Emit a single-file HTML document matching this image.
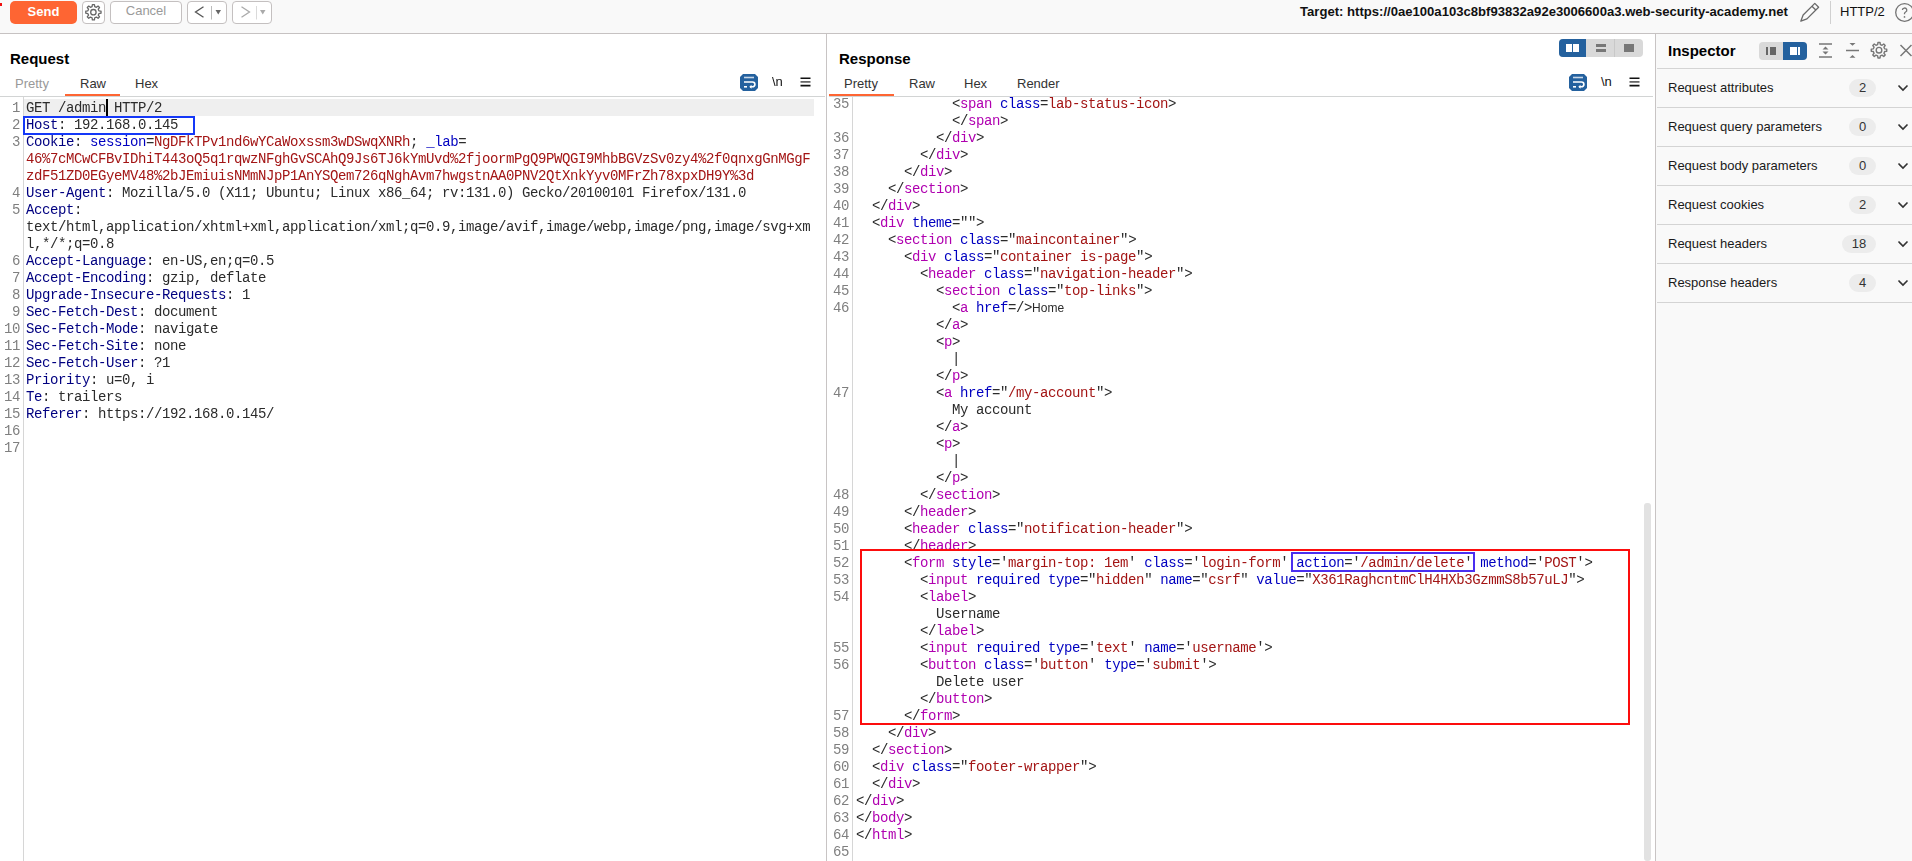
<!DOCTYPE html>
<html><head><meta charset="utf-8">
<style>
*{box-sizing:border-box}
html,body{margin:0;padding:0}
body{width:1912px;height:861px;overflow:hidden;position:relative;background:#fff;font-family:"Liberation Sans",sans-serif;font-size:13px;color:#222}
.a{position:absolute}
.ln{position:absolute;height:17px;line-height:17px;text-align:right;font-family:"Liberation Mono",monospace;font-size:14px;letter-spacing:-0.4px;color:#7f7f7f;white-space:pre}
.cl{position:absolute;height:17px;line-height:17px;font-family:"Liberation Mono",monospace;font-size:14px;letter-spacing:-0.4px;white-space:pre;color:#2b2b2b}
.sans{font-family:"Liberation Sans",sans-serif;font-size:12px;letter-spacing:0;color:#2b2b2b}
.btn{position:absolute;top:1px;height:23px;border:1px solid #c4c0c0;border-radius:4px;background:#fff}
.h1{position:absolute;font-weight:bold;font-size:15px;color:#000;line-height:18px}
.tab{position:absolute;font-size:13px;line-height:16px;color:#333}
.row{position:absolute;left:1657px;width:255px;height:39px;border-bottom:1px solid #d4d4d4}
.row .t{position:absolute;left:11px;top:11px;font-size:13px;line-height:16px;color:#1a1a1a}
.row .c{position:absolute;top:10px;height:18px;border-radius:9px;background:#ececec;font-size:13px;line-height:18px;text-align:center;color:#333}
.row svg{position:absolute;left:240px;top:14px}
</style></head><body>
<!-- toolbar -->
<div class="a" style="left:0;top:0;width:1912px;height:33px;background:#f9f9f9"></div>
<div class="a" style="left:0;top:33px;width:1912px;height:1px;background:#c6c2c2"></div>
<div class="a" style="left:0;top:3px;width:1.5px;height:3px;background:#f01010"></div>
<div class="a" style="left:10px;top:1px;width:67px;height:23px;background:#fe6533;border-radius:5px;color:#fff;font-weight:bold;font-size:13px;line-height:21px;text-align:center">Send</div>
<div class="btn" style="left:82px;width:23px"><svg width="21" height="21" viewBox="0 0 21 21" style="position:absolute;left:0;top:0"><g fill="none" stroke="#666" stroke-width="1.3" stroke-linejoin="round"><path d="M15.94 8.87 L18.03 9.17 L18.03 11.23 L15.94 11.53 L15.26 13.18 L16.52 14.87 L15.07 16.32 L13.38 15.06 L11.73 15.74 L11.43 17.83 L9.37 17.83 L9.07 15.74 L7.42 15.06 L5.73 16.32 L4.28 14.87 L5.54 13.18 L4.86 11.53 L2.77 11.23 L2.77 9.17 L4.86 8.87 L5.54 7.22 L4.28 5.53 L5.73 4.08 L7.42 5.34 L9.07 4.66 L9.37 2.57 L11.43 2.57 L11.73 4.66 L13.38 5.34 L15.07 4.08 L16.52 5.53 L15.26 7.22Z"/><circle cx="10.4" cy="10.2" r="2.7"/></g></svg></div>
<div class="btn" style="left:110px;width:72px;color:#9a9a9a;line-height:18px;text-align:center">Cancel</div>
<div class="btn" style="left:187px;width:40px"><svg width="38" height="21" viewBox="0 0 38 21" style="position:absolute;left:0;top:0"><path d="M15.5 4.8L7.5 10L15.5 15.2" fill="none" stroke="#555" stroke-width="1.3"/><path d="M23.5 4v13.5" stroke="#aaa" stroke-width="0.8"/><path d="M27.5 8h5.5l-2.75 4.5z" fill="#666"/></svg></div>
<div class="btn" style="left:232px;width:40px"><svg width="38" height="21" viewBox="0 0 38 21" style="position:absolute;left:0;top:0"><path d="M8.5 4.8L16.5 10L8.5 15.2" fill="none" stroke="#aaa" stroke-width="1.3"/><path d="M23.5 4v13.5" stroke="#d0d0d0" stroke-width="0.8"/><path d="M27 8h5.5l-2.75 4.5z" fill="#aaa"/></svg></div>
<div class="a" style="left:1300px;top:4px;font-weight:bold;font-size:13.1px;line-height:16px;color:#111">Target: https://0ae100a103c8bf93832a92e3006600a3.web-security-academy.net</div>
<svg class="a" style="left:1799px;top:1px" width="22" height="22" viewBox="0 0 22 22"><g fill="none" stroke="#6a6a6a" stroke-width="1.3" stroke-linejoin="round"><path d="M1.80 20.20 L7.95 17.87 L19.62 6.20 L15.80 2.38 L4.13 14.05Z"/><path d="M16.79 9.03L12.97 5.21"/></g></svg>
<div class="a" style="left:1830px;top:1px;width:1px;height:23px;background:#d0d0d0"></div>
<div class="a" style="left:1840px;top:4px;font-size:13px;line-height:16px;color:#111">HTTP/2</div>
<svg class="a" style="left:1894px;top:2px" width="22" height="22" viewBox="0 0 22 22"><g fill="none" stroke="#737373" stroke-width="1.3"><circle cx="10.6" cy="10.45" r="8.9"/><path d="M8.4 8.1a2.2 2.1 0 1 1 3.2 1.9c-.7.4-1.1.8-1.1 1.6v.6"/></g><circle cx="10.5" cy="14.9" r="0.85" fill="#737373"/></svg>

<!-- request panel -->
<div class="h1" style="left:10px;top:50px">Request</div>
<div class="tab" style="left:15px;top:76px;color:#999">Pretty</div>
<div class="tab" style="left:80px;top:76px">Raw</div>
<div class="tab" style="left:135px;top:76px">Hex</div>
<div class="a" style="left:65px;top:94px;width:55px;height:2px;background:#fe6533"></div>
<div class="a" style="left:0;top:96px;width:825px;height:1px;background:#d2d4d4"></div>
<div class="a" style="left:23px;top:97px;width:1px;height:764px;background:#d6d6d6"></div>
<div class="a" style="left:24px;top:99px;width:790px;height:17px;background:#efefef"></div>
<div class="a" style="left:106px;top:99px;width:2px;height:17px;background:#000"></div>
<div style="position:absolute;left:0;top:0;width:826px;height:861px;will-change:transform">
<div class="ln" style="top:100px;left:0;width:20px">1</div>
<div class="cl" style="top:100px;left:26px"><span style="color:#2b2b2b">GET /admin HTTP/2</span></div>
<div class="ln" style="top:117px;left:0;width:20px">2</div>
<div class="cl" style="top:117px;left:26px"><span style="color:#000080">Host</span><span style="color:#2b2b2b">: 192.168.0.145</span></div>
<div class="ln" style="top:134px;left:0;width:20px">3</div>
<div class="cl" style="top:134px;left:26px"><span style="color:#000080">Cookie</span><span style="color:#2b2b2b">: </span><span style="color:#0000c0">session</span><span style="color:#2b2b2b">=</span><span style="color:#a31515">NgDFkTPv1nd6wYCaWoxssm3wDSwqXNRh</span><span style="color:#2b2b2b">; </span><span style="color:#0000c0">_lab</span><span style="color:#2b2b2b">=</span></div>
<div class="cl" style="top:151px;left:26px"><span style="color:#a31515">46%7cMCwCFBvIDhiT443oQ5q1rqwzNFghGvSCAhQ9Js6TJ6kYmUvd%2fjoormPgQ9PWQGI9MhbBGVzSv0zy4%2f0qnxgGnMGgF</span></div>
<div class="cl" style="top:168px;left:26px"><span style="color:#a31515">zdF51ZD0EGyeMV48%2bJEmiuisNMmNJpP1AnYSQem726qNghAvm7hwgstnAA0PNV2QtXnkYyv0MFrZh78xpxDH9Y%3d</span></div>
<div class="ln" style="top:185px;left:0;width:20px">4</div>
<div class="cl" style="top:185px;left:26px"><span style="color:#000080">User-Agent</span><span style="color:#2b2b2b">: Mozilla/5.0 (X11; Ubuntu; Linux x86_64; rv:131.0) Gecko/20100101 Firefox/131.0</span></div>
<div class="ln" style="top:202px;left:0;width:20px">5</div>
<div class="cl" style="top:202px;left:26px"><span style="color:#000080">Accept</span><span style="color:#2b2b2b">:</span></div>
<div class="cl" style="top:219px;left:26px"><span style="color:#2b2b2b">text/html,application/xhtml+xml,application/xml;q=0.9,image/avif,image/webp,image/png,image/svg+xm</span></div>
<div class="cl" style="top:236px;left:26px"><span style="color:#2b2b2b">l,*/*;q=0.8</span></div>
<div class="ln" style="top:253px;left:0;width:20px">6</div>
<div class="cl" style="top:253px;left:26px"><span style="color:#000080">Accept-Language</span><span style="color:#2b2b2b">: en-US,en;q=0.5</span></div>
<div class="ln" style="top:270px;left:0;width:20px">7</div>
<div class="cl" style="top:270px;left:26px"><span style="color:#000080">Accept-Encoding</span><span style="color:#2b2b2b">: gzip, deflate</span></div>
<div class="ln" style="top:287px;left:0;width:20px">8</div>
<div class="cl" style="top:287px;left:26px"><span style="color:#000080">Upgrade-Insecure-Requests</span><span style="color:#2b2b2b">: 1</span></div>
<div class="ln" style="top:304px;left:0;width:20px">9</div>
<div class="cl" style="top:304px;left:26px"><span style="color:#000080">Sec-Fetch-Dest</span><span style="color:#2b2b2b">: document</span></div>
<div class="ln" style="top:321px;left:0;width:20px">10</div>
<div class="cl" style="top:321px;left:26px"><span style="color:#000080">Sec-Fetch-Mode</span><span style="color:#2b2b2b">: navigate</span></div>
<div class="ln" style="top:338px;left:0;width:20px">11</div>
<div class="cl" style="top:338px;left:26px"><span style="color:#000080">Sec-Fetch-Site</span><span style="color:#2b2b2b">: none</span></div>
<div class="ln" style="top:355px;left:0;width:20px">12</div>
<div class="cl" style="top:355px;left:26px"><span style="color:#000080">Sec-Fetch-User</span><span style="color:#2b2b2b">: ?1</span></div>
<div class="ln" style="top:372px;left:0;width:20px">13</div>
<div class="cl" style="top:372px;left:26px"><span style="color:#000080">Priority</span><span style="color:#2b2b2b">: u=0, i</span></div>
<div class="ln" style="top:389px;left:0;width:20px">14</div>
<div class="cl" style="top:389px;left:26px"><span style="color:#000080">Te</span><span style="color:#2b2b2b">: trailers</span></div>
<div class="ln" style="top:406px;left:0;width:20px">15</div>
<div class="cl" style="top:406px;left:26px"><span style="color:#000080">Referer</span><span style="color:#2b2b2b">: https://192.168.0.145/</span></div>
<div class="ln" style="top:423px;left:0;width:20px">16</div>
<div class="cl" style="top:423px;left:26px"></div>
<div class="ln" style="top:440px;left:0;width:20px">17</div>
<div class="cl" style="top:440px;left:26px"></div>
</div>
<div class="a" style="left:23px;top:116px;width:172px;height:19px;border:2px solid #1438f8"></div>

<!-- divider -->
<div class="a" style="left:826px;top:34px;width:1px;height:827px;background:#c8c4c4"></div>

<!-- response panel -->
<div class="h1" style="left:839px;top:50px">Response</div>
<div class="tab" style="left:844px;top:76px">Pretty</div>
<div class="tab" style="left:909px;top:76px">Raw</div>
<div class="tab" style="left:964px;top:76px">Hex</div>
<div class="tab" style="left:1017px;top:76px">Render</div>
<div class="a" style="left:829px;top:94px;width:65px;height:2px;background:#fe6533"></div>
<div class="a" style="left:829px;top:96px;width:824px;height:1px;background:#d2d4d4"></div>
<div class="a" style="left:827px;top:97px;width:826px;height:764px;overflow:hidden;will-change:transform">
<div style="position:absolute;left:-827px;top:-97px;width:1912px;height:861px">
<div class="ln" style="top:96px;left:826px;width:23px">35</div>
<div class="cl" style="top:96px;left:952px"><span style="color:#2b2b2b">&lt;</span><span style="color:#b000b0">span</span><span style="color:#2b2b2b"> </span><span style="color:#0000c0">class</span><span style="color:#2b2b2b">=</span><span style="color:#a31515">lab-status-icon</span><span style="color:#2b2b2b">&gt;</span></div>
<div class="cl" style="top:113px;left:952px"><span style="color:#2b2b2b">&lt;/</span><span style="color:#b000b0">span</span><span style="color:#2b2b2b">&gt;</span></div>
<div class="ln" style="top:130px;left:826px;width:23px">36</div>
<div class="cl" style="top:130px;left:936px"><span style="color:#2b2b2b">&lt;/</span><span style="color:#b000b0">div</span><span style="color:#2b2b2b">&gt;</span></div>
<div class="ln" style="top:147px;left:826px;width:23px">37</div>
<div class="cl" style="top:147px;left:920px"><span style="color:#2b2b2b">&lt;/</span><span style="color:#b000b0">div</span><span style="color:#2b2b2b">&gt;</span></div>
<div class="ln" style="top:164px;left:826px;width:23px">38</div>
<div class="cl" style="top:164px;left:904px"><span style="color:#2b2b2b">&lt;/</span><span style="color:#b000b0">div</span><span style="color:#2b2b2b">&gt;</span></div>
<div class="ln" style="top:181px;left:826px;width:23px">39</div>
<div class="cl" style="top:181px;left:888px"><span style="color:#2b2b2b">&lt;/</span><span style="color:#b000b0">section</span><span style="color:#2b2b2b">&gt;</span></div>
<div class="ln" style="top:198px;left:826px;width:23px">40</div>
<div class="cl" style="top:198px;left:872px"><span style="color:#2b2b2b">&lt;/</span><span style="color:#b000b0">div</span><span style="color:#2b2b2b">&gt;</span></div>
<div class="ln" style="top:215px;left:826px;width:23px">41</div>
<div class="cl" style="top:215px;left:872px"><span style="color:#2b2b2b">&lt;</span><span style="color:#b000b0">div</span><span style="color:#2b2b2b"> </span><span style="color:#0000c0">theme</span><span style="color:#2b2b2b">=""&gt;</span></div>
<div class="ln" style="top:232px;left:826px;width:23px">42</div>
<div class="cl" style="top:232px;left:888px"><span style="color:#2b2b2b">&lt;</span><span style="color:#b000b0">section</span><span style="color:#2b2b2b"> </span><span style="color:#0000c0">class</span><span style="color:#2b2b2b">="</span><span style="color:#a31515">maincontainer</span><span style="color:#2b2b2b">"</span><span style="color:#2b2b2b">&gt;</span></div>
<div class="ln" style="top:249px;left:826px;width:23px">43</div>
<div class="cl" style="top:249px;left:904px"><span style="color:#2b2b2b">&lt;</span><span style="color:#b000b0">div</span><span style="color:#2b2b2b"> </span><span style="color:#0000c0">class</span><span style="color:#2b2b2b">="</span><span style="color:#a31515">container is-page</span><span style="color:#2b2b2b">"</span><span style="color:#2b2b2b">&gt;</span></div>
<div class="ln" style="top:266px;left:826px;width:23px">44</div>
<div class="cl" style="top:266px;left:920px"><span style="color:#2b2b2b">&lt;</span><span style="color:#b000b0">header</span><span style="color:#2b2b2b"> </span><span style="color:#0000c0">class</span><span style="color:#2b2b2b">="</span><span style="color:#a31515">navigation-header</span><span style="color:#2b2b2b">"</span><span style="color:#2b2b2b">&gt;</span></div>
<div class="ln" style="top:283px;left:826px;width:23px">45</div>
<div class="cl" style="top:283px;left:936px"><span style="color:#2b2b2b">&lt;</span><span style="color:#b000b0">section</span><span style="color:#2b2b2b"> </span><span style="color:#0000c0">class</span><span style="color:#2b2b2b">="</span><span style="color:#a31515">top-links</span><span style="color:#2b2b2b">"</span><span style="color:#2b2b2b">&gt;</span></div>
<div class="ln" style="top:300px;left:826px;width:23px">46</div>
<div class="cl" style="top:300px;left:952px"><span style="color:#2b2b2b">&lt;</span><span style="color:#b000b0">a</span><span style="color:#2b2b2b"> </span><span style="color:#0000c0">href</span><span style="color:#2b2b2b">=/&gt;</span><span class="sans">Home</span></div>
<div class="cl" style="top:317px;left:936px"><span style="color:#2b2b2b">&lt;/</span><span style="color:#b000b0">a</span><span style="color:#2b2b2b">&gt;</span></div>
<div class="cl" style="top:334px;left:936px"><span style="color:#2b2b2b">&lt;</span><span style="color:#b000b0">p</span><span style="color:#2b2b2b">&gt;</span></div>
<div class="cl" style="top:351px;left:952px"><span style="color:#2b2b2b">|</span></div>
<div class="cl" style="top:368px;left:936px"><span style="color:#2b2b2b">&lt;/</span><span style="color:#b000b0">p</span><span style="color:#2b2b2b">&gt;</span></div>
<div class="ln" style="top:385px;left:826px;width:23px">47</div>
<div class="cl" style="top:385px;left:936px"><span style="color:#2b2b2b">&lt;</span><span style="color:#b000b0">a</span><span style="color:#2b2b2b"> </span><span style="color:#0000c0">href</span><span style="color:#2b2b2b">="</span><span style="color:#a31515">/my-account</span><span style="color:#2b2b2b">"</span><span style="color:#2b2b2b">&gt;</span></div>
<div class="cl" style="top:402px;left:952px"><span style="color:#2b2b2b">My account</span></div>
<div class="cl" style="top:419px;left:936px"><span style="color:#2b2b2b">&lt;/</span><span style="color:#b000b0">a</span><span style="color:#2b2b2b">&gt;</span></div>
<div class="cl" style="top:436px;left:936px"><span style="color:#2b2b2b">&lt;</span><span style="color:#b000b0">p</span><span style="color:#2b2b2b">&gt;</span></div>
<div class="cl" style="top:453px;left:952px"><span style="color:#2b2b2b">|</span></div>
<div class="cl" style="top:470px;left:936px"><span style="color:#2b2b2b">&lt;/</span><span style="color:#b000b0">p</span><span style="color:#2b2b2b">&gt;</span></div>
<div class="ln" style="top:487px;left:826px;width:23px">48</div>
<div class="cl" style="top:487px;left:920px"><span style="color:#2b2b2b">&lt;/</span><span style="color:#b000b0">section</span><span style="color:#2b2b2b">&gt;</span></div>
<div class="ln" style="top:504px;left:826px;width:23px">49</div>
<div class="cl" style="top:504px;left:904px"><span style="color:#2b2b2b">&lt;/</span><span style="color:#b000b0">header</span><span style="color:#2b2b2b">&gt;</span></div>
<div class="ln" style="top:521px;left:826px;width:23px">50</div>
<div class="cl" style="top:521px;left:904px"><span style="color:#2b2b2b">&lt;</span><span style="color:#b000b0">header</span><span style="color:#2b2b2b"> </span><span style="color:#0000c0">class</span><span style="color:#2b2b2b">="</span><span style="color:#a31515">notification-header</span><span style="color:#2b2b2b">"</span><span style="color:#2b2b2b">&gt;</span></div>
<div class="ln" style="top:538px;left:826px;width:23px">51</div>
<div class="cl" style="top:538px;left:904px"><span style="color:#2b2b2b">&lt;/</span><span style="color:#b000b0">header</span><span style="color:#2b2b2b">&gt;</span></div>
<div class="ln" style="top:555px;left:826px;width:23px">52</div>
<div class="cl" style="top:555px;left:904px"><span style="color:#2b2b2b">&lt;</span><span style="color:#b000b0">form</span><span style="color:#2b2b2b"> </span><span style="color:#0000c0">style</span><span style="color:#2b2b2b">='</span><span style="color:#a31515">margin-top: 1em</span><span style="color:#2b2b2b">'</span><span style="color:#2b2b2b"> </span><span style="color:#0000c0">class</span><span style="color:#2b2b2b">='</span><span style="color:#a31515">login-form</span><span style="color:#2b2b2b">'</span><span style="color:#2b2b2b"> </span><span style="color:#0000c0">action</span><span style="color:#2b2b2b">='</span><span style="color:#a31515">/admin/delete</span><span style="color:#2b2b2b">'</span><span style="color:#2b2b2b"> </span><span style="color:#0000c0">method</span><span style="color:#2b2b2b">='</span><span style="color:#a31515">POST</span><span style="color:#2b2b2b">'</span><span style="color:#2b2b2b">&gt;</span></div>
<div class="ln" style="top:572px;left:826px;width:23px">53</div>
<div class="cl" style="top:572px;left:920px"><span style="color:#2b2b2b">&lt;</span><span style="color:#b000b0">input</span><span style="color:#2b2b2b"> </span><span style="color:#0000c0">required</span><span style="color:#2b2b2b"> </span><span style="color:#0000c0">type</span><span style="color:#2b2b2b">="</span><span style="color:#a31515">hidden</span><span style="color:#2b2b2b">"</span><span style="color:#2b2b2b"> </span><span style="color:#0000c0">name</span><span style="color:#2b2b2b">="</span><span style="color:#a31515">csrf</span><span style="color:#2b2b2b">"</span><span style="color:#2b2b2b"> </span><span style="color:#0000c0">value</span><span style="color:#2b2b2b">="</span><span style="color:#a31515">X361RaghcntmClH4HXb3GzmmS8b57uLJ</span><span style="color:#2b2b2b">"</span><span style="color:#2b2b2b">&gt;</span></div>
<div class="ln" style="top:589px;left:826px;width:23px">54</div>
<div class="cl" style="top:589px;left:920px"><span style="color:#2b2b2b">&lt;</span><span style="color:#b000b0">label</span><span style="color:#2b2b2b">&gt;</span></div>
<div class="cl" style="top:606px;left:936px"><span style="color:#2b2b2b">Username</span></div>
<div class="cl" style="top:623px;left:920px"><span style="color:#2b2b2b">&lt;/</span><span style="color:#b000b0">label</span><span style="color:#2b2b2b">&gt;</span></div>
<div class="ln" style="top:640px;left:826px;width:23px">55</div>
<div class="cl" style="top:640px;left:920px"><span style="color:#2b2b2b">&lt;</span><span style="color:#b000b0">input</span><span style="color:#2b2b2b"> </span><span style="color:#0000c0">required</span><span style="color:#2b2b2b"> </span><span style="color:#0000c0">type</span><span style="color:#2b2b2b">='</span><span style="color:#a31515">text</span><span style="color:#2b2b2b">'</span><span style="color:#2b2b2b"> </span><span style="color:#0000c0">name</span><span style="color:#2b2b2b">='</span><span style="color:#a31515">username</span><span style="color:#2b2b2b">'</span><span style="color:#2b2b2b">&gt;</span></div>
<div class="ln" style="top:657px;left:826px;width:23px">56</div>
<div class="cl" style="top:657px;left:920px"><span style="color:#2b2b2b">&lt;</span><span style="color:#b000b0">button</span><span style="color:#2b2b2b"> </span><span style="color:#0000c0">class</span><span style="color:#2b2b2b">='</span><span style="color:#a31515">button</span><span style="color:#2b2b2b">'</span><span style="color:#2b2b2b"> </span><span style="color:#0000c0">type</span><span style="color:#2b2b2b">='</span><span style="color:#a31515">submit</span><span style="color:#2b2b2b">'</span><span style="color:#2b2b2b">&gt;</span></div>
<div class="cl" style="top:674px;left:936px"><span style="color:#2b2b2b">Delete user</span></div>
<div class="cl" style="top:691px;left:920px"><span style="color:#2b2b2b">&lt;/</span><span style="color:#b000b0">button</span><span style="color:#2b2b2b">&gt;</span></div>
<div class="ln" style="top:708px;left:826px;width:23px">57</div>
<div class="cl" style="top:708px;left:904px"><span style="color:#2b2b2b">&lt;/</span><span style="color:#b000b0">form</span><span style="color:#2b2b2b">&gt;</span></div>
<div class="ln" style="top:725px;left:826px;width:23px">58</div>
<div class="cl" style="top:725px;left:888px"><span style="color:#2b2b2b">&lt;/</span><span style="color:#b000b0">div</span><span style="color:#2b2b2b">&gt;</span></div>
<div class="ln" style="top:742px;left:826px;width:23px">59</div>
<div class="cl" style="top:742px;left:872px"><span style="color:#2b2b2b">&lt;/</span><span style="color:#b000b0">section</span><span style="color:#2b2b2b">&gt;</span></div>
<div class="ln" style="top:759px;left:826px;width:23px">60</div>
<div class="cl" style="top:759px;left:872px"><span style="color:#2b2b2b">&lt;</span><span style="color:#b000b0">div</span><span style="color:#2b2b2b"> </span><span style="color:#0000c0">class</span><span style="color:#2b2b2b">="</span><span style="color:#a31515">footer-wrapper</span><span style="color:#2b2b2b">"</span><span style="color:#2b2b2b">&gt;</span></div>
<div class="ln" style="top:776px;left:826px;width:23px">61</div>
<div class="cl" style="top:776px;left:872px"><span style="color:#2b2b2b">&lt;/</span><span style="color:#b000b0">div</span><span style="color:#2b2b2b">&gt;</span></div>
<div class="ln" style="top:793px;left:826px;width:23px">62</div>
<div class="cl" style="top:793px;left:856px"><span style="color:#2b2b2b">&lt;/</span><span style="color:#b000b0">div</span><span style="color:#2b2b2b">&gt;</span></div>
<div class="ln" style="top:810px;left:826px;width:23px">63</div>
<div class="cl" style="top:810px;left:856px"><span style="color:#2b2b2b">&lt;/</span><span style="color:#b000b0">body</span><span style="color:#2b2b2b">&gt;</span></div>
<div class="ln" style="top:827px;left:826px;width:23px">64</div>
<div class="cl" style="top:827px;left:856px"><span style="color:#2b2b2b">&lt;/</span><span style="color:#b000b0">html</span><span style="color:#2b2b2b">&gt;</span></div>
<div class="ln" style="top:844px;left:826px;width:23px">65</div>
<div class="cl" style="top:844px;left:856px"></div>
</div></div>
<div class="a" style="left:852px;top:97px;width:1px;height:764px;background:#d6d6d6"></div>
<div class="a" style="left:860px;top:549px;width:770px;height:176px;border:2px solid #fc0d0d"></div>
<div class="a" style="left:1291px;top:552px;width:184px;height:20px;border:2px solid #4a2ef0"></div>
<div class="a" style="left:1644px;top:503px;width:7px;height:358px;background:#e2e2e2;border-radius:3px"></div>

<!-- inspector -->
<div class="a" style="left:1655px;top:34px;width:1px;height:827px;background:#c8c4c4"></div>
<div class="a" style="left:1656px;top:34px;width:256px;height:827px;background:#f9f9f9"></div>
<div class="h1" style="left:1668px;top:42px">Inspector</div>
<div class="a" style="left:1759px;top:42px;width:48px;height:18px;border-radius:4px;background:#d9d9d9;overflow:hidden"><div class="a" style="left:24px;top:0;width:24px;height:18px;background:#24619e"></div>
<div class="a" style="left:7px;top:5px;width:2px;height:8px;background:#666"></div><div class="a" style="left:11px;top:5px;width:6px;height:8px;background:#666"></div>
<div class="a" style="left:31px;top:5px;width:7px;height:8px;background:#fff"></div><div class="a" style="left:39px;top:5px;width:2px;height:8px;background:#fff"></div></div>
<svg class="a" style="left:1818px;top:42px" width="16" height="17" viewBox="0 0 16 17"><g stroke="#777" stroke-width="1.5"><path d="M1 2h13M1 15h13"/></g><path d="M7.5 4.5l3 3h-6zM7.5 12.5l3-3h-6z" fill="#777"/></svg>
<svg class="a" style="left:1845px;top:42px" width="16" height="17" viewBox="0 0 16 17"><g stroke="#777" stroke-width="1.5"><path d="M1 8.5h13"/></g><path d="M7.5 3.8l3-2.8h-6zM7.5 13l3 2.8h-6z" fill="#777"/></svg>
<svg class="a" style="left:1869px;top:40px" width="20" height="20" viewBox="0 0 20 20"><g fill="none" stroke="#777" stroke-width="1.4" stroke-linejoin="round"><path d="M15.64 8.85 L17.73 9.16 L17.73 11.24 L15.64 11.55 L14.95 13.23 L16.20 14.93 L14.73 16.40 L13.03 15.15 L11.35 15.84 L11.04 17.93 L8.96 17.93 L8.65 15.84 L6.97 15.15 L5.27 16.40 L3.80 14.93 L5.05 13.23 L4.36 11.55 L2.27 11.24 L2.27 9.16 L4.36 8.85 L5.05 7.17 L3.80 5.47 L5.27 4.00 L6.97 5.25 L8.65 4.56 L8.96 2.47 L11.04 2.47 L11.35 4.56 L13.03 5.25 L14.73 4.00 L16.20 5.47 L14.95 7.17Z"/><circle cx="10" cy="10.2" r="2.8"/></g></svg>
<svg class="a" style="left:1899px;top:43px" width="14" height="15" viewBox="0 0 14 15"><g stroke="#777" stroke-width="1.5"><path d="M1.5 2l11 11M12.5 2l-11 11"/></g></svg>
<div class="a" style="left:1657px;top:68px;width:255px;height:1px;background:#d4d4d4"></div>
<div class="row" style="top:69px"><div class="t">Request attributes</div><div class="c" style="left:192px;width:27px">2</div><svg width="12" height="10" viewBox="0 0 12 10"><path d="M1.5 2.5l4.5 4.5 4.5-4.5" fill="none" stroke="#333" stroke-width="1.6"/></svg></div>
<div class="row" style="top:108px"><div class="t">Request query parameters</div><div class="c" style="left:192px;width:27px">0</div><svg width="12" height="10" viewBox="0 0 12 10"><path d="M1.5 2.5l4.5 4.5 4.5-4.5" fill="none" stroke="#333" stroke-width="1.6"/></svg></div>
<div class="row" style="top:147px"><div class="t">Request body parameters</div><div class="c" style="left:192px;width:27px">0</div><svg width="12" height="10" viewBox="0 0 12 10"><path d="M1.5 2.5l4.5 4.5 4.5-4.5" fill="none" stroke="#333" stroke-width="1.6"/></svg></div>
<div class="row" style="top:186px"><div class="t">Request cookies</div><div class="c" style="left:192px;width:27px">2</div><svg width="12" height="10" viewBox="0 0 12 10"><path d="M1.5 2.5l4.5 4.5 4.5-4.5" fill="none" stroke="#333" stroke-width="1.6"/></svg></div>
<div class="row" style="top:225px"><div class="t">Request headers</div><div class="c" style="left:185px;width:34px">18</div><svg width="12" height="10" viewBox="0 0 12 10"><path d="M1.5 2.5l4.5 4.5 4.5-4.5" fill="none" stroke="#333" stroke-width="1.6"/></svg></div>
<div class="row" style="top:264px"><div class="t">Response headers</div><div class="c" style="left:192px;width:27px">4</div><svg width="12" height="10" viewBox="0 0 12 10"><path d="M1.5 2.5l4.5 4.5 4.5-4.5" fill="none" stroke="#333" stroke-width="1.6"/></svg></div>
<div class="a" style="left:1559px;top:39px;width:84px;height:18px;border-radius:4px;background:#d9d9d9;overflow:hidden"><div class="a" style="left:0;top:0;width:27px;height:18px;background:#24619e"></div><div class="a" style="left:55px;top:0;width:1px;height:18px;background:#c8c8c8"></div>
<div class="a" style="left:7px;top:5px;width:6px;height:8px;background:#fff"></div><div class="a" style="left:14px;top:5px;width:6px;height:8px;background:#fff"></div>
<div class="a" style="left:37px;top:5px;width:10px;height:3px;background:#777"></div><div class="a" style="left:37px;top:10px;width:10px;height:3px;background:#777"></div>
<div class="a" style="left:65px;top:5px;width:10px;height:8px;background:#777"></div></div>
<svg class="a" style="left:740px;top:74px" width="18" height="17" viewBox="0 0 18 17"><path d="M3 0h12l3 3v11l-3 3H3l-3-3V3z" fill="#24619e"/><g stroke="#fff" stroke-width="1.6" fill="none"><path d="M4 3.5h10" stroke="#c9d8e8"/><path d="M4 8h8.5a2.4 2.4 0 0 1 0 4.8H10"/><path d="M4 12.8h3"/></g><path d="M11.5 10.8l-2.2 2 2.2 2z" fill="#fff"/></svg>
<div class="a" style="left:772px;top:75px;font-size:13px;line-height:13px;color:#111;font-family:'Liberation Sans',sans-serif">\n</div>
<svg class="a" style="left:800px;top:77px" width="11" height="10" viewBox="0 0 11 10"><g stroke="#111" stroke-width="1.6"><path d="M0.5 1.2h10M0.5 8.6h10"/><path d="M0.5 4.9h10" stroke="#555"/></g></svg>
<svg class="a" style="left:1569px;top:74px" width="18" height="17" viewBox="0 0 18 17"><path d="M3 0h12l3 3v11l-3 3H3l-3-3V3z" fill="#24619e"/><g stroke="#fff" stroke-width="1.6" fill="none"><path d="M4 3.5h10" stroke="#c9d8e8"/><path d="M4 8h8.5a2.4 2.4 0 0 1 0 4.8H10"/><path d="M4 12.8h3"/></g><path d="M11.5 10.8l-2.2 2 2.2 2z" fill="#fff"/></svg>
<div class="a" style="left:1601px;top:75px;font-size:13px;line-height:13px;color:#111;font-family:'Liberation Sans',sans-serif">\n</div>
<svg class="a" style="left:1629px;top:77px" width="11" height="10" viewBox="0 0 11 10"><g stroke="#111" stroke-width="1.6"><path d="M0.5 1.2h10M0.5 8.6h10"/><path d="M0.5 4.9h10" stroke="#555"/></g></svg>
</body></html>
